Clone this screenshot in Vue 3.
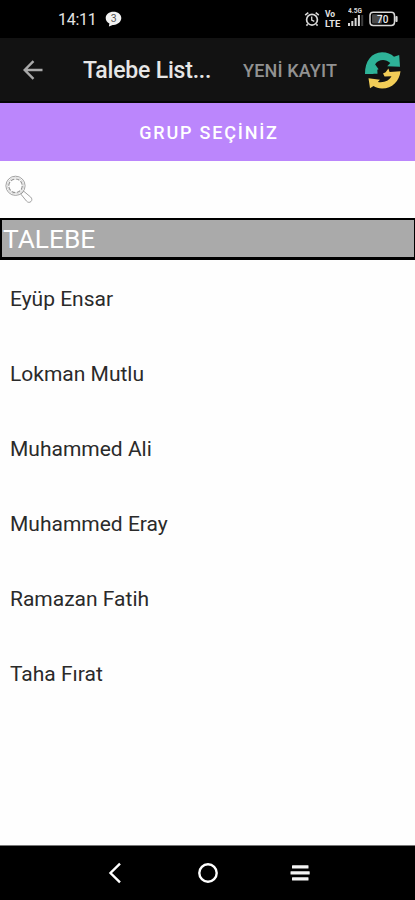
<template>
  <div class="screen">
    <div class="status-bar">
      <span class="clock">14:11</span>
      <svg class="chat" width="17" height="17" viewBox="0 0 17 17">
        <path d="M8.5 .8C4.1.8.7 3.5.7 7.1c0 2.4 1.4 4.4 3.7 5.5l-.5 2.9 3.8-1.6h.8c4.4 0 7.8-3.2 7.8-6.8S12.9.8 8.5.8z" fill="#f2f2f2" />
        <text x="8.6" y="10.8" text-anchor="middle" font-size="10.5" fill="#555">3</text>
      </svg>
      <div class="indicators">
        <svg class="alarm" width="16" height="16" viewBox="0 0 16 16" fill="none" stroke="#d8d8d8">
          <circle cx="8" cy="8.7" r="5.4" stroke-width="1.7" />
          <path d="M1.2 4.2 4.3 1.7M14.8 4.2 11.7 1.7M3.7 13.2l-1.3 1.4M12.3 13.2l1.3 1.4" stroke-width="1.6" />
          <path d="M7.7 5.6v3.5l2.6 1.3" stroke-width="1.3" />
        </svg>
        <div class="volte">
          <span class="vo">Vo</span>
          <span class="lte">LTE</span>
        </div>
        <svg class="signal" width="17" height="20" viewBox="0 0 17 20">
          <text x="0" y="6" font-size="7" font-weight="700" fill="#d8d8d8" textLength="14" lengthAdjust="spacingAndGlyphs">4.5G</text>
          <rect
            v-for="bar in bars"
            :key="bar.x"
            :x="bar.x"
            :y="19 - bar.h"
            width="2"
            :height="bar.h"
            :fill="bar.color"
          />
        </svg>
        <svg class="battery" width="29" height="16" viewBox="0 0 29 16">
          <rect x="1" y="1.3" width="24.5" height="13.2" rx="3.2" fill="none" stroke="#d8d8d8" stroke-width="1.5" />
          <rect x="3" y="3.3" width="10" height="9.2" rx="1" fill="#4a4a4a" />
          <rect x="26.3" y="5" width="2.3" height="6" rx="1" fill="#d8d8d8" />
          <text x="13.7" y="11.5" text-anchor="middle" font-size="10" font-weight="500" fill="#eee">70</text>
        </svg>
      </div>
    </div>

    <header class="toolbar">
      <svg class="back" width="20" height="20" viewBox="0 0 20 20" fill="none" stroke="#a9a9a9" stroke-width="2.4">
        <path d="M19.5 10H2M10.5 1.2 1.7 10l8.8 8.8" />
      </svg>
      <h1 class="title">Talebe List...</h1>
      <span class="action">YENİ KAYIT</span>
      <svg class="sync" width="38" height="38" viewBox="0 0 38 38">
        <path d="M1 23C.8 10 7.5 1.5 18 1.2c5.2 0 9 1.6 12 4.6L35.2 4 36 15.8l-12.8-.6 3.1-3.2c-3.7-3.2-8-4-12-1.7-3.4 2-5 5.8-4.9 12.7z" fill="#2eb398" />
        <path d="m7.5 18 3.5-4.8 3.6 5-1.3.6.2 3.9H8z" fill="#2eb398" />
        <path d="M4.5 27.2 16 28.8l-2.2 2.2c6.3 1 11.3-1.2 13.7-5.7l-6.9.3-1.6-3.2 2.6-1.2 2.8-3.8 1.2 3.5 10.9-.7c-1 9.8-8.2 17.3-18.4 17.3-3.6 0-6.3-.9-8.6-2.4L6 37.2z" fill="#f2cd57" />
      </svg>
    </header>

    <button class="group-button">GRUP SEÇİNİZ</button>

    <div class="search">
      <svg width="29" height="29" viewBox="0 0 29 29" fill="none" stroke="#969696" stroke-width=".9">
        <circle cx="10.5" cy="10.8" r="9.6" />
        <circle cx="10.5" cy="10.8" r="6.8" stroke-width="1.2" stroke-dasharray="4 1.34" />
        <circle cx="10.5" cy="10.8" r="8.2" stroke="#d5d5d5" />
        <path d="m15.9 19.2 5.6 6.9c1.3 1.5 3.2 1.7 4.5.4 1.2-1.2 1.1-3.1-.3-4.4l-6.9-5.8z" />
      </svg>
    </div>

    <div class="table-head">TALEBE</div>

    <ul class="list">
      <li v-for="name in students" :key="name">{{ name }}</li>
    </ul>

    <nav class="nav-bar">
      <svg width="22" height="22" viewBox="0 0 22 22" fill="none" stroke="#fff" stroke-width="2.4">
        <path d="M15 1.7 5.5 11l9.5 9.3" />
      </svg>
      <svg width="22" height="22" viewBox="0 0 22 22" fill="none" stroke="#fff" stroke-width="2.4">
        <circle cx="11" cy="11" r="8.7" />
      </svg>
      <svg width="22" height="22" viewBox="0 0 22 22" fill="#f4f4f4">
        <rect x="3" y="3.2" width="16.5" height="3.3" rx=".5" />
        <rect x="1.5" y="9.2" width="19.2" height="3.3" rx=".5" />
        <rect x="3" y="15.2" width="16.5" height="3.3" rx=".5" />
      </svg>
    </nav>
  </div>
</template>

<script setup>
const students = [
  'Eyüp Ensar',
  'Lokman Mutlu',
  'Muhammed Ali',
  'Muhammed Eray',
  'Ramazan Fatih',
  'Taha Fırat'
]

const bars = [
  { x: 0, h: 3, color: '#d8d8d8' },
  { x: 3.3, h: 5, color: '#d8d8d8' },
  { x: 6.6, h: 8, color: '#d8d8d8' },
  { x: 9.9, h: 11, color: '#d8d8d8' },
  { x: 13.2, h: 11, color: '#3c3c3c' }
]
</script>

<style>
body {
  background: #fff;
}
</style>

<style scoped>
.screen {
  display: flex;
  flex-direction: column;
  width: 415px;
  height: 900px;
  overflow: hidden;
  background: #fefefe;
  font-family: Roboto, "Noto Sans", sans-serif;
}

svg {
  display: block;
  flex-shrink: 0;
}

.status-bar {
  display: flex;
  align-items: center;
  flex-shrink: 0;
  box-sizing: border-box;
  height: 38px;
  padding: 0 17px 0 58px;
  background: #000;
  color: #e4e4e4;
}

.clock {
  width: 47px;
  padding-top: 2px;
  font-size: 16px;
  letter-spacing: -0.3px;
  line-height: 20px;
}

.indicators {
  display: flex;
  align-items: center;
  margin-left: auto;
}

.volte {
  display: flex;
  flex-direction: column;
  width: 17px;
  margin: 0 6px 0 5px;
  font-weight: 700;
  line-height: 9px;
}

.vo {
  font-size: 8.5px;
}

.lte {
  font-size: 9.5px;
}

.signal {
  margin: -4px 4px 0 0;
}

.toolbar {
  display: flex;
  align-items: center;
  flex-shrink: 0;
  box-sizing: border-box;
  height: 65px;
  padding: 0 13px 0 23px;
  border-bottom: 2px solid #050505;
  background: #121212;
}

.title {
  width: 160px;
  margin: 3px 0 0 40px;
  color: #e6e6e6;
  font-size: 23px;
  font-weight: 500;
  letter-spacing: -0.2px;
  line-height: 30px;
  white-space: nowrap;
}

.action {
  margin-top: 2px;
  color: #929292;
  font-size: 18px;
  font-weight: 500;
  letter-spacing: 0.15px;
  white-space: nowrap;
}

.sync {
  margin-left: auto;
}

.group-button {
  flex-shrink: 0;
  height: 58px;
  padding: 1px 0 0 3px;
  border: 0;
  background: #bb86fc;
  color: #fff;
  font-family: inherit;
  font-size: 18px;
  font-weight: 500;
  letter-spacing: 1.8px;
}

.search {
  display: flex;
  align-items: center;
  flex-shrink: 0;
  height: 57px;
  padding-left: 5px;
}

.table-head {
  flex-shrink: 0;
  box-sizing: border-box;
  height: 42px;
  padding-left: 1px;
  border: solid #000;
  border-width: 2px 1px 3px 2px;
  background: #aaa;
  color: #fff;
  font-size: 26.3px;
  line-height: 38px;
}

.list {
  flex: 1;
  margin: 0;
  padding: 1px 0 0;
  list-style: none;
}

.list li {
  display: flex;
  align-items: center;
  height: 75px;
  padding-left: 10px;
  color: #2a2a2a;
  font-size: 21px;
}

.nav-bar {
  display: flex;
  align-items: center;
  justify-content: center;
  gap: 70px;
  flex-shrink: 0;
  box-sizing: border-box;
  height: 55px;
  border-top: 1px solid #777;
  background: #000;
}
</style>
